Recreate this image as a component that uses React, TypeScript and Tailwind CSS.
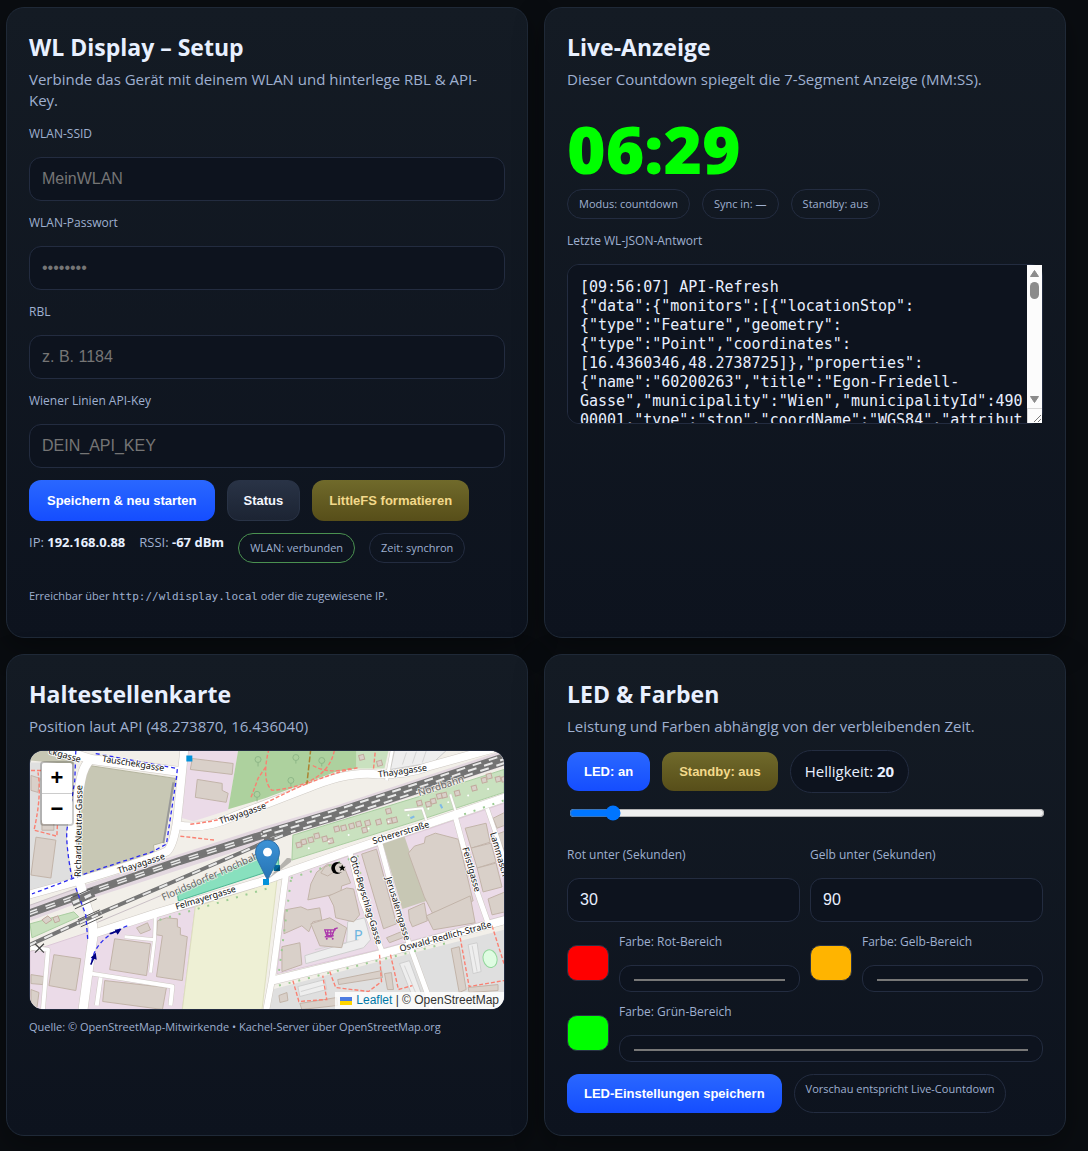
import { useState, type ReactNode } from "react";

const RESPONSE_LOG = [
  "[09:56:07] API-Refresh",
  '{"data":{"monitors":[{"locationStop":',
  '{"type":"Feature","geometry":',
  '{"type":"Point","coordinates":',
  '[16.4360346,48.2738725]},"properties":',
  '{"name":"60200263","title":"Egon-Friedell-',
  'Gasse","municipality":"Wien","municipalityId":490',
  '00001,"type":"stop","coordName":"WGS84","attribut',
  'es":{"rbl":1184}}},"lines":[{"name":"33A",',
  '"towards":"Friedrich-Engels-Platz",',
  '"direction":"R","platform":"1",',
  '"realtimeSupported":true}]}]}}',
].join("\n");

const fieldBox =
  "rounded-xl border border-[#232c40] bg-[#0d131e] text-[#e8efff] placeholder:text-[#757575] outline-none focus:border-[#2962ff]";
const textField = `${fieldBox} block h-11 w-full px-3 font-['Liberation_Sans',Arial,sans-serif] text-base`;
const buttonBase =
  "rounded-xl border font-['Liberation_Sans',Arial,sans-serif] text-[13px] font-bold cursor-pointer";
const primary = `${buttonBase} border-transparent bg-linear-to-b from-[#2a67ff] to-[#154dff] bg-origin-border text-white`;
const secondary = `${buttonBase} border-[#293346] bg-linear-to-b from-[#293346] to-[#1c2433] text-[#f4f7ff]`;
const warning = `${buttonBase} border-transparent bg-linear-to-b from-[#706a2b] to-[#574e19] bg-origin-border text-[#f3d98b]`;

function Card({ title, subtitle, children }: { title: string; subtitle: string; children: ReactNode }) {
  return (
    <section className="min-w-0 rounded-[18px] border border-[#1f2937] bg-linear-to-b from-[#141b24] to-[#0d131e] p-[22px] shadow-[0_10px_30px_rgba(0,0,0,0.35)]">
      <h2 className="mb-1 text-[23px] leading-[35px] font-bold text-[#e8f0ff]">{title}</h2>
      <p className="pb-px text-[15px] leading-[21px] text-[#9fb0d0]">{subtitle}</p>
      {children}
    </section>
  );
}

function Label({ htmlFor, children }: { htmlFor: string; children: ReactNode }) {
  return (
    <label htmlFor={htmlFor} className="mt-[13px] mb-[14px] block text-xs leading-[18px] text-[#9fb0d0]">
      {children}
    </label>
  );
}

function Pill({ ok, children }: { ok?: boolean; children: ReactNode }) {
  return (
    <span
      className={`rounded-full border px-[11px] py-[6px] text-[11px] leading-4 text-[#9fb0d0] ${
        ok ? "border-[#4a9150]" : "border-[#232c40]"
      }`}
    >
      {children}
    </span>
  );
}

const BUILDINGS = [
  "163,8 204,13 203,24 161,19",
  "168,29 193,33 193,40 199,43 197,52 166,47",
  "6,87 26,90 21,128 1,125",
  "1,25 10,28 8,42 1,40",
  "12,70 24,70 24,80 12,80",
  "24,205 51,209 46,241 19,236",
  "85,189 121,194 117,226 80,220",
  "75,231 137,238 133,260 73,252",
  "107,178 118,173 121,180 111,184",
  "137,168 148,169 148,177 151,178 151,185 158,187 153,231 127,227 133,186 127,185 128,171",
  "1,225 14,227 13,235 1,234",
  "1,240 9,243 7,258 1,258",
  "282,134 288,122 299,114 316,118 322,133 313,136 312,143 279,150",
  "296,117 303,114 305,122 299,126 292,123",
  "256,160 272,157 279,160 291,158 293,170 284,172 280,182 273,176 255,184",
  "300,146 318,138 325,139 331,165 325,172 307,168 305,156",
  "282,174 301,168 318,178 313,198 291,196",
  "253,197 271,193 273,215 253,222",
  "333,104 348,99 368,174 355,179",
  "358,188 375,181 377,187 361,193",
  "380,103 386,96 396,93 397,87 407,83 430,89 432,97 445,151 438,153 404,163 396,147",
  "380,160 396,153 399,171 384,177 381,170",
  "398,166 442,146 447,173 405,180",
  "437,78 458,73 462,92 443,98",
  "443,98 463,93 468,112 449,118",
  "449,118 468,113 474,137 455,142",
  "465,68 477,62 477,75 469,78",
  "469,84 477,81 477,102",
  "460,149 477,142 477,162 464,165",
  "423,199 431,197 438,240 431,243",
  "309,230 353,221 354,228 310,235",
  "356,224 363,223 365,240 359,240",
  "271,254 308,248 309,256 273,260",
  "440,238 470,235 470,241 441,243",
  "250,246 258,243 259,251 251,253",
];

const SHEDS = [
  [267, 93], [272, 90], [279, 88], [285, 84], [293, 87], [299, 89], [305, 77], [312, 76], [320, 74], [333, 78],
  [327, 72], [336, 71], [347, 70], [357, 59], [358, 69], [363, 68], [388, 51], [397, 52], [402, 49], [408, 44],
  [413, 43], [426, 41], [443, 36], [453, 28], [458, 24], [467, 27], [473, 27], [330, 5], [348, 11],
] as const;

const ROADS: [string, number][] = [
  ["M20,-6 Q45,4 62,9 L150,21", 9],
  ["M62,8 Q54,14 51,30 L42,78 Q40,95 47,122 L58,160 Q66,175 62,195 L53,262", 9],
  ["M155,-2 L149,58 Q146,92 138,101 Q120,110 52,130 L-2,145", 8],
  ["M148,75 Q175,80 205,66 L278,38 Q320,20 350,24 Q380,24 400,16 L465,-2", 8],
  ["M64,184 L128,163 L231,132 L314,103 L478,47", 8],
  ["M257,124 L243,230 L237,262", 6],
  ["M243,231 L350,205 L478,170", 8],
  ["M321,101 L333,150 L354,203", 5],
  ["M351,92 L372,170 L402,252 L404,262", 5],
  ["M427,66 L443,125 L461,176", 5],
  ["M459,58 L470,90 L478,115", 4],
  ["M126,163 L125,190 L121,223", 3],
  ["M95,187 L125,190", 3],
  ["M62,224 L143,237 L141,256", 4],
  ["M71,228 L67,256", 4],
  ["M1,198 L18,200 L13,260", 4],
  ["M358,30 L364,-2", 3],
  ["M422,44 L429,66", 2],
  ["M376,60 L394,58 L398,70", 2],
];

const PATHS = [
  "M161,74 Q200,70 236,53 Q290,25 330,17",
  "M151,86 L186,90",
  "M222,47 L229,28 L237,16",
  "M240,-2 Q232,30 243,40 Q300,35 306,-2",
  "M284,15 Q300,24 322,18",
  "M345,18 L347,-2",
  "M1,20 L30,20 L27,86 L4,80 Q12,45 8,22",
  "M264,231 L270,252 L298,250 L294,226",
  "M301,222 L307,238 L340,242 L353,232 L351,205",
  "M362,205 L370,240 L384,236",
  "M432,188 L441,237 L476,231",
  "M464,176 L476,214",
];

const STREETS: { name: string; x: number; y: number; angle: number; rail?: boolean; size?: number }[] = [
  { name: "ckgasse", x: 18, y: 3, angle: 16 },
  { name: "Tauschekgasse", x: 72, y: 11, angle: 9 },
  { name: "Richard-Neutra-Gasse", x: 51, y: 127, angle: -89 },
  { name: "Thayagasse", x: 89, y: 124, angle: -18 },
  { name: "Thayagasse", x: 191, y: 74, angle: -19 },
  { name: "Thayagasse", x: 350, y: 27, angle: -8 },
  { name: "Nordbahn", x: 391, y: 46, angle: -18, rail: true, size: 10 },
  { name: "Schererstraße", x: 345, y: 94, angle: -17 },
  { name: "Floridsdorfer Hochbahn", x: 134, y: 151, angle: -24, rail: true, size: 10 },
  { name: "Felmayergasse", x: 147, y: 160, angle: -17 },
  { name: "Otto-Beyschlag-Gasse", x: 321, y: 107, angle: 73 },
  { name: "Jerusalemgasse", x: 357, y: 128, angle: 73 },
  { name: "Feistlgasse", x: 434, y: 98, angle: 74 },
  { name: "Lammasch", x: 462, y: 83, angle: 74 },
  { name: "Oswald-Redlich-Straße", x: 372, y: 202, angle: -15 },
];

function StreetMap() {
  return (
    <svg viewBox="0 0 476 260" preserveAspectRatio="xMidYMid slice" className="block h-full w-full" aria-hidden="true">
      <rect width="476" height="260" fill="#f2efe9" />
      <polygon points="0,12 46,12 38,82 47,128 0,143" fill="#dfdfdf" />
      <polygon points="0,0 44,0 44,14 0,10" fill="#c7c7b4" />
      <polygon points="156,0 209,0 199,60 164,71 150,67" fill="#ebdbe8" />
      <polygon points="209,0 328,0 328,18 308,21 236,48 199,59" fill="#add19e" />
      <polygon points="328,0 360,0 356,18 328,18" fill="#c9e1bf" />
      <polygon points="366,0 418,0 405,12 362,19" fill="#eeeeee" stroke="#ccc" />
      <polygon points="59,15 146,28 134,92 124,95 125,103 54,128 46,122 44,95 56,20" fill="#c7c7b4" stroke="#b4b49e" />
      <polyline points="144,32 134,93" fill="none" stroke="#999" strokeWidth="2" />
      <polygon points="264,85 398,44 476,19 476,42 400,67 263,110" fill="#c9e1bf" stroke="#a9cda0" />
      <polygon points="0,202 60,182 166,157 153,260 0,260" fill="#ebdbe8" stroke="#dcc8d8" />
      <polygon points="166,157 248,130 233,260 153,260" fill="#eef0d5" stroke="#dddfbd" />
      <polygon points="259,125 314,108 476,53 476,166 350,200 248,224" fill="#ebdbe8" stroke="#dcc8d8" />
      <polygon points="243,240 350,212 476,180 476,260 240,260" fill="#dfdfdf" />
      <polygon points="354,93 376,86 398,151 374,159" fill="#c7c7b4" />
      <polygon points="0,174 44,162 49,167 2,188" fill="#c9e1bf" stroke="#a9cda0" />
      <polygon points="148,143 249,97 250,118 149,151" fill="#88e0be" stroke="#4db592" />

      <g fill="#eeeeee" stroke="#cfcfcf">
        <polygon points="319,172 336,168 342,190 335,198 277,214 276,206 318,193" />
        <polygon points="269,237 296,230 298,240 271,247" />
        <polygon points="371,214 381,211 393,244 384,247" />
        <polygon points="440,195 449,193 453,222 445,224" />
      </g>
      <g stroke="#d4d4d4">
        <path d="M286,200 L330,190 M378,2 L374,14 M388,1 L384,13 M398,0 L394,12 M376,216 L388,245 M444,196 L449,222 M272,242 L297,235" />
      </g>

      <g fill="#d9d0c9">
        {BUILDINGS.map((points) => (
          <polygon key={points} points={points} stroke="#c2b3a8" />
        ))}
        {SHEDS.map(([x, y]) => (
          <rect key={`${x}-${y}`} x={x} y={y} width="5" height="5" stroke="#c0a89c" transform={`rotate(-15 ${x} ${y})`} />
        ))}
        <polygon points="12,170 18,166 22,170 16,174" stroke="#c0a89c" />
        <polygon points="23,168 28,166 30,171 25,173" stroke="#c0a89c" />
      </g>

      <g fill="none" stroke="#cfcac4" strokeLinejoin="round">
        {ROADS.map(([d, width]) => (
          <path key={d} d={d} strokeWidth={width + 1} />
        ))}
      </g>

      <g fill="none">
        <path d="M-2,164 L51,144 L236,84 L314,61 L478,7" stroke="#e3d8e0" strokeWidth="15" />
        <path d="M-2,164 L51,145 L150,111 L236,84" stroke="#757575" strokeWidth="8" />
        <path d="M-2,164 L51,145 L150,111 L236,84" stroke="#e9e9e9" strokeWidth="4" strokeDasharray="10 9" />
        <path d="M-2,164 L51,145 L150,111 L236,84" stroke="#757575" strokeWidth="1" />
        <path d="M234,86 L314,62 L478,8" stroke="#737373" strokeWidth="12" />
        <path d="M234,82 L313,58 L478,4" stroke="#e9e9e9" strokeWidth="2" strokeDasharray="9 8" />
        <path d="M234,86 L314,62 L478,8" stroke="#e9e9e9" strokeWidth="2" strokeDasharray="9 8" strokeDashoffset="5" />
        <path d="M235,90 L315,66 L478,12" stroke="#e9e9e9" strokeWidth="2" strokeDasharray="9 8" strokeDashoffset="10" />
        <path d="M-2,196 L59,168 L148,130 L236,92 L262,82" stroke="#757575" strokeWidth="4" />
        <path d="M-2,196 L59,168 L148,130 L236,92 L262,82" stroke="#e9e9e9" strokeWidth="2" strokeDasharray="9 9" />
        <path d="M-2,156 L51,137 M62,175 L140,142" stroke="#c9bfc5" />
      </g>

      <g fill="none" stroke="#ffffff" strokeLinejoin="round">
        {ROADS.map(([d, width]) => (
          <path key={d} d={d} strokeWidth={width} />
        ))}
      </g>
      <g fill="none">
        <path d="M42,153 L64,143" stroke="#757575" strokeWidth="8" />
        <path d="M43,153 L63,144" stroke="#e9e9e9" strokeWidth="3" strokeDasharray="7 6" />
        <path d="M49,173 L71,163" stroke="#757575" strokeWidth="4" />
        <path d="M50,173 L70,164" stroke="#e9e9e9" strokeWidth="2" strokeDasharray="7 6" />
        <path d="M41,148 L63,138 M45,159 L67,149 M48,170 L70,160 M51,177 L73,167" stroke="#555" />
      </g>

      <g fill="none" stroke="#fa8072" strokeWidth="1.4" strokeDasharray="4 2">
        {PATHS.map((d) => (
          <path key={d} d={d} />
        ))}
      </g>
      <path d="M282,-2 L278,34" stroke="#ac8331" strokeWidth="1.5" strokeDasharray="6 2" />
      <g fill="none" stroke="#2a2af0" strokeWidth="1.3" strokeDasharray="4 3">
        <path d="M46,0 L45,30 L37,80 Q36,95 42,128 M66,3 L148,18 L147,28 L137,94 L122,102 L60,122 L2,144" />
        <path d="M46,138 L56,165 L58,190" />
        <path d="M62,212 Q66,188 98,176" />
      </g>
      <g fill="none" stroke="#000080" strokeWidth="1.5">
        <path d="M61,215 L65,206 M80,184 L89,181" />
      </g>
      <path d="M66,203 L61,208 L67,210 Z M92,179 L85,180 L88,185 Z" fill="#000080" />
      <g fill="none" stroke="#9ccc93" strokeWidth="2" strokeDasharray="2 8">
        <path d="M130,170 L240,138 M262,128 L330,106 M436,64 L476,50" />
        <path d="M262,130 L250,222 M441,104 L450,140 M250,236 L420,193 M330,112 L338,165" />
      </g>

      <g fill="none" stroke="#8eb687">
        <circle cx="229" cy="9" r="3" />
        <circle cx="228" cy="44" r="3" />
        <circle cx="293" cy="10" r="3" />
        <circle cx="262" cy="30" r="3" />
        <circle cx="267" cy="7" r="3" />
        <path d="M229,12v4 M228,47v4 M293,13v3 M262,33v3 M267,10v3" />
      </g>
      <g fill="#ffffff">
        {[280, 300, 320, 340, 360, 380, 400, 420, 440, 460].map((x) => (
          <circle key={x} cx={x} cy={98 - (x - 280) * 0.33} r="1" />
        ))}
      </g>
      <ellipse cx="462" cy="209" rx="7" ry="9" fill="#dffce2" stroke="#8fd69a" transform="rotate(-15 462 209)" />
      <path d="M382,68l4,-2 M412,54l2,4" stroke="#7fb9e6" strokeWidth="2" />

      <g fontFamily="'Noto Sans', sans-serif" strokeLinejoin="round">
        {STREETS.map(({ name, x, y, angle, rail, size = 9 }) => (
          <text
            key={`${name}${x}`}
            transform={`translate(${x} ${y}) rotate(${angle})`}
            fontSize={size}
            fill={rail ? "#666666" : "#111111"}
            stroke={rail ? "#f2efe9" : "#ffffff"}
            strokeWidth="2"
            strokeOpacity={rail ? 0.7 : 0.9}
            paintOrder="stroke"
          >
            {name}
          </text>
        ))}
        <text x="325" y="190" fontSize="15" fill="#6fb6e0">P</text>
      </g>

      <circle cx="308.500" cy="118" r="6" fill="#000" />
      <circle cx="311" cy="118" r="4.800" fill="#d9d0c9" />
      <path d="M313.500,114.500l1,2.300h2.500l-2,1.600l.8,2.500l-2.300,-1.500l-2.300,1.500l.8,-2.500l-2,-1.600h2.500z" fill="#000" />
      <path
        d="M309,178l-3,1l-3,8h-7 M307,180h-11l2,6h7 M297,183h8 M299,180v6 M302,180v6"
        fill="none"
        stroke="#ac39ac"
        strokeWidth="1.300"
      />
      <circle cx="298" cy="189" r="1" fill="#ac39ac" />
      <circle cx="304" cy="189" r="1" fill="#ac39ac" />
      <path d="M5,194l9,9 M14,194l-9,9" stroke="#444" strokeWidth="1.200" />
      <rect x="157" y="5" width="6" height="6" fill="#0092da" />
      <rect x="245" y="115" width="6" height="6" fill="#00689b" />

      <defs>
        <linearGradient id="pin" x1="0" y1="0" x2="0" y2="1">
          <stop offset="0" stopColor="#3d93d6" />
          <stop offset="1" stopColor="#2573b4" />
        </linearGradient>
      </defs>
      <path d="M238,130 L262,112 Q264,107 258,108 Z" fill="#000" opacity="0.25" />
      <path
        d="M238.500,90 a12,12 0 0 1 12,12 c0,4 -1.500,7 -3,10 l-9,18 l-9,-18 c-1.500,-3 -3,-6 -3,-10 a12,12 0 0 1 12,-12z"
        fill="url(#pin)"
        stroke="#2d6fa8"
      />
      <circle cx="238.500" cy="102" r="4.500" fill="#fff" />
      <rect x="234" y="129" width="6" height="6" fill="#0092da" />
    </svg>
  );
}

function LogScrollbar() {
  return (
    <div
      aria-hidden="true"
      className="pointer-events-none absolute top-px right-px bottom-px flex w-[15px] flex-col items-center bg-[#fcfcfc]"
    >
      <svg viewBox="0 0 15 17" className="h-[17px] w-[15px]">
        <path d="M7.500 5.500 L11.500 11.500 H3.500 Z" fill="#8b8b8b" stroke="#8b8b8b" strokeLinejoin="round" />
      </svg>
      <span className="h-[17px] w-[9px] rounded-full bg-[#8b8b8b]" />
      <svg viewBox="0 0 15 17" className="mt-auto h-[17px] w-[15px]">
        <path d="M7.500 11.500 L11.500 5.500 H3.500 Z" fill="#8b8b8b" stroke="#8b8b8b" strokeLinejoin="round" />
      </svg>
      <svg viewBox="0 0 15 15" className="h-[15px] w-[15px]">
        <path d="M0 .5 H15 M.5 0 V15" stroke="#d9d9d9" />
        <path d="M7 14 L14 7 M11 14 L14 11" stroke="#777" />
      </svg>
    </div>
  );
}

function ColorSetting({ id, label, value, swatch, wide }: { id: string; label: string; value: string; swatch: string; wide?: boolean }) {
  return (
    <div className={`flex items-center gap-[10px] ${wide ? "col-span-2" : ""}`}>
      <span className={`h-9 w-[42px] shrink-0 rounded-[10px] border border-[#293346] ${swatch}`} />
      <div className="min-w-0 flex-1">
        <label htmlFor={id} className="mb-[14px] block text-xs leading-[18px] text-[#9fb0d0]">
          {label}
        </label>
        <input id={id} type="color" defaultValue={value} className={`${fieldBox} block h-[27px] w-full px-3 py-[10px]`} />
      </div>
    </div>
  );
}

export default function App() {
  const [brightness, setBrightness] = useState(20);

  return (
    <main className="min-h-screen bg-[#0a0d11] pt-[7px] pr-[22px] pb-[14px] pl-[6px] font-['Open_Sans','Segoe_UI',sans-serif] text-[#e8f0ff]">
      <div className="grid grid-cols-2 gap-4">
        <Card title="WL Display – Setup" subtitle="Verbinde das Gerät mit deinem WLAN und hinterlege RBL & API-Key.">
          <form onSubmit={(event) => event.preventDefault()}>
            <Label htmlFor="ssid">WLAN-SSID</Label>
            <input id="ssid" type="text" placeholder="MeinWLAN" className={textField} />
            <Label htmlFor="password">WLAN-Passwort</Label>
            <input id="password" type="password" placeholder="••••••••" className={textField} />
            <Label htmlFor="rbl">RBL</Label>
            <input id="rbl" type="text" placeholder="z. B. 1184" className={textField} />
            <Label htmlFor="apikey">Wiener Linien API-Key</Label>
            <input id="apikey" type="text" placeholder="DEIN_API_KEY" className={textField} />
            <div className="mt-3 flex flex-wrap gap-3">
              <button type="submit" className={`${primary} h-[41px] px-[17px]`}>Speichern &amp; neu starten</button>
              <button type="button" className={`${secondary} h-[41px] px-4`}>Status</button>
              <button type="button" className={`${warning} h-[41px] px-4`}>LittleFS formatieren</button>
            </div>
          </form>
          <div className="mt-3 flex flex-wrap items-start gap-[14px] text-[13px] leading-[18px] text-[#9fb0d0]">
            <span>IP: <b className="text-[#e8f0ff]">192.168.0.88</b></span>
            <span>RSSI: <b className="text-[#e8f0ff]">-67 dBm</b></span>
            <Pill ok>WLAN: verbunden</Pill>
            <Pill>Zeit: synchron</Pill>
          </div>
          <p className="mt-6 mb-[9px] text-[11px] leading-[18px] text-[#9fb0d0]">
            Erreichbar über <code className="font-['DejaVu_Sans_Mono',monospace] text-[11px]">http://wldisplay.local</code> oder die zugewiesene IP.
          </p>
        </Card>

        <Card title="Live-Anzeige" subtitle="Dieser Countdown spiegelt die 7-Segment Anzeige (MM:SS).">
          <div className="mt-[22px] mb-[6px] text-[66px] leading-[70px] font-extrabold text-[#00ff00] tabular-nums">06:29</div>
          <div className="flex flex-wrap gap-3">
            <Pill>Modus: countdown</Pill>
            <Pill>Sync in: —</Pill>
            <Pill>Standby: aus</Pill>
          </div>
          <Label htmlFor="log">Letzte WL-JSON-Antwort</Label>
          <div className="relative">
            <textarea
              id="log"
              readOnly
              defaultValue={RESPONSE_LOG}
              className={`${fieldBox} block h-40 w-full resize-none overflow-y-scroll py-[13px] pr-1 pl-3 font-['DejaVu_Sans_Mono',monospace] text-[15px] leading-[19px]`}
            />
            <LogScrollbar />
          </div>
        </Card>

        <Card title="Haltestellenkarte" subtitle="Position laut API (48.273870, 16.436040)">
          <div className="relative mt-3 h-[260px] overflow-hidden rounded-[14px] border border-[#232c40]">
            <StreetMap />
            <div className="absolute top-[10px] left-[10px] flex w-[34px] flex-col overflow-hidden rounded border-2 border-black/20 bg-clip-padding text-black">
              <button type="button" aria-label="Vergrößern" className="h-[31px] border-b border-[#ccc] bg-white font-['Liberation_Sans',Arial,sans-serif] text-[22px] leading-[30px] font-bold">+</button>
              <button type="button" aria-label="Verkleinern" className="h-[30px] bg-white font-['Liberation_Sans',Arial,sans-serif] text-[22px] leading-[28px] font-bold">−</button>
            </div>
            <div className="absolute right-0 bottom-0 flex items-center bg-white/80 px-[5px] font-['Liberation_Sans',Arial,sans-serif] text-xs leading-[17px] text-[#333]">
              <svg viewBox="0 0 12 8" className="mr-1 h-2 w-3" aria-hidden="true">
                <path fill="#4C7BE1" d="M0 0h12v4H0z" />
                <path fill="#FFD500" d="M0 4h12v4H0z" />
              </svg>
              <a href="#leaflet" className="text-[#0078a8]">Leaflet</a>
              <span className="whitespace-pre"> | © OpenStreetMap</span>
            </div>
          </div>
          <p className="mt-2 text-[11px] leading-[18px] text-[#9fb0d0]">
            Quelle: © OpenStreetMap-Mitwirkende • Kachel-Server über OpenStreetMap.org
          </p>
        </Card>

        <Card title="LED & Farben" subtitle="Leistung und Farben abhängig von der verbleibenden Zeit.">
          <div className="mt-3 flex flex-wrap items-center gap-3">
            <button type="button" className={`${primary} h-[39px] px-4`}>LED: an</button>
            <button type="button" className={`${warning} h-[39px] px-4`}>Standby: aus</button>
            <label htmlFor="brightness" className="rounded-full border border-[#232c40] bg-[#0d131e] px-[14px] text-[15px] leading-[41px]">
              Helligkeit: <b>{brightness}</b>
            </label>
          </div>
          <input
            id="brightness"
            type="range"
            min={0}
            max={255}
            value={brightness}
            onChange={(event) => setBrightness(Number(event.target.value))}
            className="mt-3 mb-3 ml-[2px] block h-4 w-full accent-[#0075ff]"
          />
          <div className="grid grid-cols-2 gap-x-[10px]">
            <div>
              <Label htmlFor="red-limit">Rot unter (Sekunden)</Label>
              <input id="red-limit" type="text" inputMode="numeric" defaultValue="30" className={textField} />
            </div>
            <div>
              <Label htmlFor="yellow-limit">Gelb unter (Sekunden)</Label>
              <input id="yellow-limit" type="text" inputMode="numeric" defaultValue="90" className={textField} />
            </div>
          </div>
          <div className="mt-[11px] grid grid-cols-2 gap-x-[10px] gap-y-[11px]">
            <ColorSetting id="red" label="Farbe: Rot-Bereich" value="#ff0000" swatch="bg-[#ff0000]" />
            <ColorSetting id="yellow" label="Farbe: Gelb-Bereich" value="#ffb400" swatch="bg-[#ffb400]" />
            <ColorSetting id="green" label="Farbe: Grün-Bereich" value="#00ff00" swatch="bg-[#00ff00]" wide />
          </div>
          <div className="mt-3 flex flex-wrap gap-3">
            <button type="button" className={`${primary} h-[39px] px-4`}>LED-Einstellungen speichern</button>
            <Pill>Vorschau entspricht Live-Countdown</Pill>
          </div>
        </Card>
      </div>
    </main>
  );
}
